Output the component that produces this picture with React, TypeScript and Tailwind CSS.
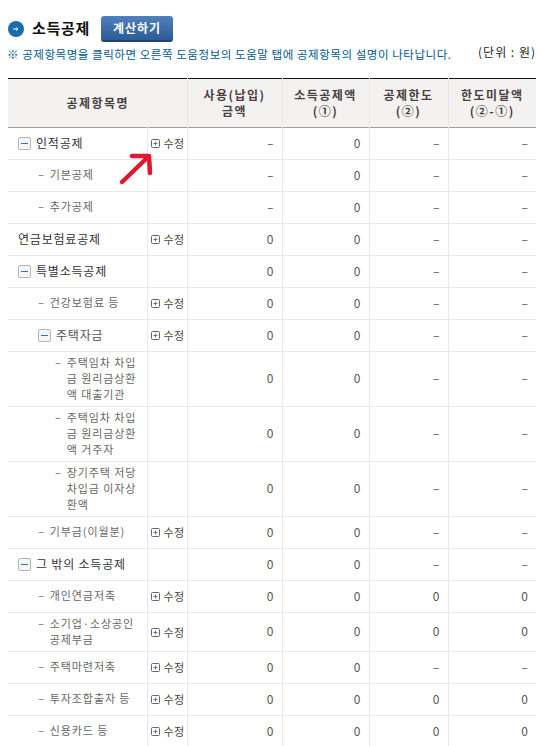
const Minus = () => (
  <span className="inline-flex w-[13px] h-[13px] shrink-0 items-center justify-center border border-[#b4b4b4] rounded-[2px] bg-[#f6f6f6]">
    <span className="block w-[7px] h-px bg-[#2f72b5]" />
  </span>
);

const Edit = () => (
  <span className="flex items-center gap-[4px] text-[11px] tracking-[0.5px] text-[#444]">
    <svg width="9" height="9" viewBox="0 0 9 9" className="shrink-0">
      <rect x="0.5" y="0.5" width="8" height="8" rx="1" fill="none" stroke="#666" />
      <path d="M2.5 4.5h4M4.5 2.5v4" stroke="#4a7ab5" />
    </svg>
    수정
  </span>
);

type Row = {
  h: number;
  level: 0 | 1 | 2 | 3;
  lines: string[];
  toggle?: boolean;
  edit?: boolean;
  a: string;
  b: string;
  c: string;
  d: string;
};

const rows: Row[] = [
  { h: 32, level: 0, toggle: true, lines: ["인적공제"], edit: true, a: "–", b: "0", c: "–", d: "–" },
  { h: 32, level: 1, lines: ["기본공제"], a: "–", b: "0", c: "–", d: "–" },
  { h: 32, level: 1, lines: ["추가공제"], a: "–", b: "0", c: "–", d: "–" },
  { h: 32, level: 0, lines: ["연금보험료공제"], edit: true, a: "0", b: "0", c: "–", d: "–" },
  { h: 32, level: 0, toggle: true, lines: ["특별소득공제"], a: "0", b: "0", c: "–", d: "–" },
  { h: 32, level: 1, lines: ["건강보험료 등"], edit: true, a: "0", b: "0", c: "–", d: "–" },
  { h: 32, level: 2, toggle: true, lines: ["주택자금"], edit: true, a: "0", b: "0", c: "–", d: "–" },
  { h: 55, level: 3, lines: ["주택임차 차입", "금 원리금상환", "액 대출기관"], a: "0", b: "0", c: "–", d: "–" },
  { h: 55, level: 3, lines: ["주택임차 차입", "금 원리금상환", "액 거주자"], a: "0", b: "0", c: "–", d: "–" },
  { h: 55, level: 3, lines: ["장기주택 저당", "차입금 이자상", "환액"], a: "0", b: "0", c: "–", d: "–" },
  { h: 32, level: 1, lines: ["기부금(이월분)"], edit: true, a: "0", b: "0", c: "–", d: "–" },
  { h: 32, level: 0, toggle: true, lines: ["그 밖의 소득공제"], a: "0", b: "0", c: "–", d: "–" },
  { h: 32, level: 1, lines: ["개인연금저축"], edit: true, a: "0", b: "0", c: "0", d: "0" },
  { h: 39, level: 1, lines: ["소기업·소상공인", "공제부금"], edit: true, a: "0", b: "0", c: "0", d: "0" },
  { h: 32, level: 1, lines: ["주택마련저축"], edit: true, a: "0", b: "0", c: "–", d: "–" },
  { h: 32, level: 1, lines: ["투자조합출자 등"], edit: true, a: "0", b: "0", c: "0", d: "0" },
  { h: 32, level: 1, lines: ["신용카드 등"], edit: true, a: "0", b: "0", c: "0", d: "0" },
];

function NameCell({ r }: { r: Row }) {
  if (r.level === 0) {
    return (
      <div className="flex items-center gap-[5px] pl-[10px] pb-[1px] text-[12px] tracking-[0.8px] text-[#333]">
        {r.toggle && <Minus />}
        <span className="whitespace-nowrap">{r.lines[0]}</span>
      </div>
    );
  }
  if (r.level === 2) {
    return (
      <div className="flex items-center gap-[5px] pl-[30px] pb-[1px] text-[12px] tracking-[0.8px] text-[#555]">
        <Minus />
        <span className="whitespace-nowrap">{r.lines[0]}</span>
      </div>
    );
  }
  return (
    <div className={r.level === 1 ? "flex gap-[5px] pl-[30px] pb-[3px] text-[11px] tracking-[0.9px] leading-[16px] text-[#666]" : "flex gap-[5px] pl-[47px] pb-[3px] text-[11px] tracking-[0.9px] leading-[16px] text-[#666]"}>
      <span>–</span>
      <span>
        {r.lines.map((l) => (
          <span key={l} className="block whitespace-nowrap">{l}</span>
        ))}
      </span>
    </div>
  );
}

const headCell = "border-l border-[#e8e8e8] text-center align-middle font-bold text-[12px] tracking-[1.5px] leading-[16px] text-[#4a3f44]";
const numCell = "border-l border-[#e8e8e8] text-right align-middle text-[12px] text-[#555] pr-[8px] pb-[2px]";

export default function App() {
  return (
    <div className="w-[542px] h-[746px] overflow-hidden bg-white font-['Noto_Sans_CJK_KR','Liberation_Sans',sans-serif]">
      <div className="flex items-center h-[31px] mt-[13px] pl-[8px]">
        <span className="flex items-center justify-center w-[16px] h-[16px] rounded-full bg-[#1b6ca8] text-white">
          <svg width="8" height="8" viewBox="0 0 8 8">
            <path d="M1 4h5M4.5 2.5L6 4 4.5 5.5" fill="none" stroke="#fff" />
          </svg>
        </span>
        <span className="ml-[8px] text-[15px] tracking-[0.7px] font-bold text-[#111]">소득공제</span>
        <span className="ml-[11px] flex items-center justify-center w-[72px] h-[26px] rounded-[3px] bg-gradient-to-b from-[#4f81bb] to-[#2d5c97] border-b-2 border-[#1f4470] text-[12px] tracking-[1px] font-bold text-white">
          계산하기
        </span>
      </div>
      <div className="flex justify-between h-[34px] pl-[7px] pr-[6px]">
        <span className="text-[11.5px] tracking-[0.55px] leading-[18px] mt-[1px] text-[#005a8c] whitespace-nowrap">※ 공제항목명을 클릭하면 오른쪽 도움정보의 도움말 탭에 공제항목의 설명이 나타납니다.</span>
        <span className="text-[12px] tracking-[1px] leading-[18px] -mt-[1px] text-[#222] whitespace-nowrap">(단위 : 원)</span>
      </div>
      <table className="ml-[8px] w-[528px] table-fixed border-collapse border-t border-[#111]">
        <colgroup>
          <col className="w-[139px]" />
          <col className="w-[40px]" />
          <col className="w-[95px]" />
          <col className="w-[87px]" />
          <col className="w-[79px]" />
          <col className="w-[88px]" />
        </colgroup>
        <thead>
          <tr className="h-[49px] bg-[#f3f2f0] border-b border-[#a0a0a0]">
            <th colSpan={2} className="text-center align-middle font-bold text-[12px] tracking-[1.5px] text-[#4a3f44] pl-[1px]">공제항목명</th>
            <th className={headCell}>사용(납입)<br />금액</th>
            <th className={headCell}>소득공제액<br />(①)</th>
            <th className={headCell}>공제한도<br />(②)</th>
            <th className={headCell}>한도미달액<br />(②-①)</th>
          </tr>
        </thead>
        <tbody>
          {rows.map((r) => (
            <tr key={r.lines.join("")} style={{ height: r.h }} className="border-b border-[#e8e8e8]">
              <td className="p-0 align-middle"><NameCell r={r} /></td>
              <td className="border-l border-[#e8e8e8] pl-[3px] align-middle">{r.edit && <Edit />}</td>
              <td className={numCell}>{r.a}</td>
              <td className={numCell}>{r.b}</td>
              <td className={numCell}>{r.c}</td>
              <td className={numCell}>{r.d}</td>
            </tr>
          ))}
        </tbody>
      </table>
      <svg width="40" height="40" viewBox="0 0 40 40" className="absolute left-[116px] top-[150px]">
        <path d="M6 32L31 8" stroke="#e0182d" strokeWidth="4.5" strokeLinecap="round" fill="none" />
        <path d="M16 6L33 6L34 23" stroke="#e0182d" strokeWidth="4.5" strokeLinecap="round" strokeLinejoin="round" fill="none" />
      </svg>
    </div>
  );
}
